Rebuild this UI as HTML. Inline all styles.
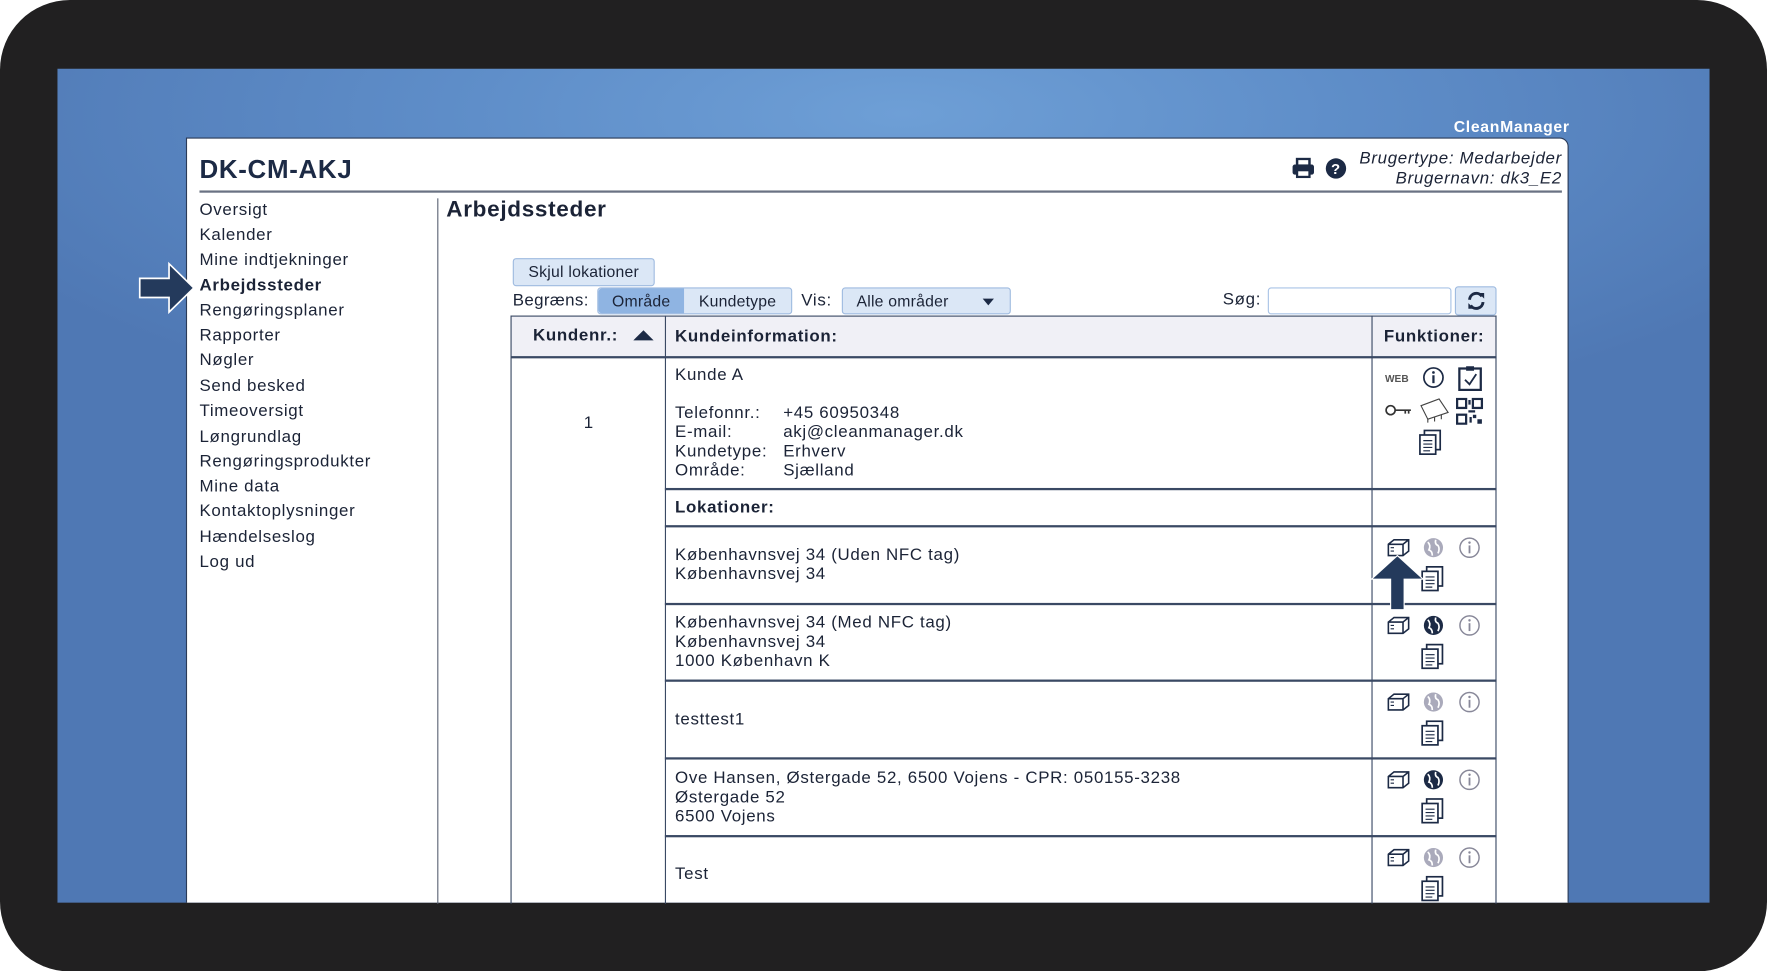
<!DOCTYPE html>
<html><head><meta charset="utf-8">
<style>
html,body{margin:0;padding:0;width:1767px;height:971px;overflow:hidden;background:#fff;}
#s{position:absolute;left:0;top:0;width:1568px;height:862px;transform:scale(1.12692);transform-origin:0 0;font-family:"Liberation Sans",sans-serif;color:#1b2336;letter-spacing:0.6px;}
.a{position:absolute;white-space:nowrap;}
#frame{position:absolute;left:0;top:0;width:1568px;height:862px;background:#212021;border-radius:62px;}
#blue{position:absolute;left:51px;top:61px;width:1466px;height:740px;overflow:hidden;
background:radial-gradient(ellipse 900px 300px at 750px 40px,#6e9fd6 0%,#5e8dc8 45%,#4f78b4 100%);}
#panel{position:absolute;left:114px;top:61px;width:1225px;height:700px;background:#fff;border:1px solid #2b3b58;border-radius:0 8px 0 0;}
.t15{font-size:15px;line-height:17px;}
.nav div{position:absolute;left:177px;font-size:15px;}
.btn{position:absolute;background:#dbe7f6;border:1px solid #9fbbe0;border-radius:3px;font-size:14px;text-align:center;}
.vl{position:absolute;width:1px;background:#3a4964;}
.hl{position:absolute;height:1px;background:#3a4964;}
.b{font-weight:bold;}
</style></head><body><div id="s">
<div id="frame"></div>
<div id="blue">
 <div class="a b" style="left:1239px;top:43px;color:#fff;font-size:14px;">CleanManager</div>
 <div id="panel"></div>
</div>
<!-- header -->
<div class="a b" style="left:177px;top:137px;font-size:23px;color:#1c2a45;">DK-CM-AKJ</div>
<div class="hl" style="left:177px;top:169px;width:1209px;background:#6a7283;height:2px"></div>
<svg class="a" style="left:1146px;top:140px" width="21" height="19" viewBox="0 0 21 19"><rect x="5" y="1" width="11" height="6" fill="none" stroke="#1c2a45" stroke-width="2.2"/><rect x="1" y="6" width="19" height="9" rx="2" fill="#1c2a45"/><rect x="5" y="11" width="11" height="6" fill="#fff" stroke="#1c2a45" stroke-width="2"/></svg>
<svg class="a" style="left:1176px;top:140px" width="19" height="19" viewBox="0 0 20 20"><circle cx="10" cy="10" r="9.5" fill="#1c2a45"/><text x="10" y="15" text-anchor="middle" fill="#fff" font-family="Liberation Sans" font-weight="bold" font-size="14">?</text></svg>
<div class="a" style="right:182px;top:132px;font-size:15px;font-style:italic;text-align:right;line-height:18px;">Brugertype: Medarbejder<br>Brugernavn: dk3_E2</div>
<!-- nav -->
<div class="nav">
<div style="top:178px">Oversigt</div><div style="top:200px">Kalender</div><div style="top:222px">Mine indtjekninger</div>
<div style="top:245px;font-weight:bold">Arbejdssteder</div><div style="top:267px">Rengøringsplaner</div><div style="top:289px">Rapporter</div>
<div style="top:311px">Nøgler</div><div style="top:334px">Send besked</div><div style="top:356px">Timeoversigt</div>
<div style="top:379px">Løngrundlag</div><div style="top:401px">Rengøringsprodukter</div><div style="top:423px">Mine data</div>
<div style="top:445px">Kontaktoplysninger</div><div style="top:468px">Hændelseslog</div><div style="top:490px">Log ud</div>
</div>
<svg class="a" style="left:122px;top:232px" width="52" height="47" viewBox="0 0 52 47"><path d="M2 15 H28 V2 L50 23.5 L28 45 V32 H2 Z" fill="#243a5c" stroke="#fff" stroke-width="1.5"/></svg>
<div class="vl" style="left:388px;top:176px;height:626px;background:#5c6475"></div>
<div class="a b" style="left:396px;top:175px;font-size:20px;">Arbejdssteder</div>
<!-- controls -->
<div class="btn" style="left:455px;top:229px;width:124px;height:23px;line-height:23px;letter-spacing:0.2px">Skjul lokationer</div>
<div class="a t15" style="left:455px;top:258px;letter-spacing:0.3px">Begræns:</div>
<div class="btn" style="left:530px;top:255px;width:171px;height:22px;"></div>
<div class="a" style="left:531px;top:256px;width:76px;height:22px;background:#8fb4e2;border-radius:3px 0 0 3px;font-size:14px;line-height:22px;text-align:center;letter-spacing:0.2px">Område</div>
<div class="a" style="left:608px;top:256px;width:93px;font-size:14px;line-height:22px;text-align:center;letter-spacing:0.2px">Kundetype</div>
<div class="a t15" style="left:711px;top:258px;">Vis:</div>
<div class="btn" style="left:747px;top:255px;width:148px;height:22px;line-height:22px;text-align:left;letter-spacing:0.2px"><span style="margin-left:12px">Alle områder</span><span style="position:absolute;right:14px;top:9px;border-left:5px solid transparent;border-right:5px solid transparent;border-top:6px solid #1c2a45;"></span></div>
<div class="a t15" style="left:1085px;top:257px;">Søg:</div>
<div class="a" style="left:1125px;top:255px;width:161px;height:22px;border:1px solid #a9c3e6;border-radius:3px;background:#fff;"></div>
<div class="btn" style="left:1291px;top:254px;width:35px;height:24px;"><svg style="margin-top:3px" width="18" height="18" viewBox="0 0 18 18"><path d="M3 8 A6 6 0 0 1 14 5" fill="none" stroke="#1c2a45" stroke-width="2.6"/><path d="M11 2 L16 2 L16 7Z" fill="#1c2a45"/><path d="M15 10 A6 6 0 0 1 4 13" fill="none" stroke="#1c2a45" stroke-width="2.6"/><path d="M7 16 L2 16 L2 11Z" fill="#1c2a45"/></svg></div>
<!-- table -->
<div class="a" style="left:453px;top:281px;width:874px;height:35px;background:#f0f0f6;"></div>
<div class="hl" style="left:453px;top:280px;width:875px;"></div>
<div class="hl" style="left:453px;top:316px;width:875px;height:2px"></div>
<div class="vl" style="left:453px;top:280px;height:522px;"></div>
<div class="vl" style="left:590px;top:280px;height:522px;"></div>
<div class="vl" style="left:1217px;top:280px;height:522px;"></div>
<div class="vl" style="left:1327px;top:280px;height:522px;"></div>
<div class="a b t15" style="left:473px;top:289px;">Kundenr.:</div>
<div class="a" style="left:562px;top:293px;border-left:9px solid transparent;border-right:9px solid transparent;border-bottom:9px solid #1c2a45;"></div>
<div class="a b t15" style="left:599px;top:290px;">Kundeinformation:</div>
<div class="a b t15" style="left:1228px;top:290px;">Funktioner:</div>
<div class="a t15" style="left:518px;top:367px;">1</div>
<div class="a t15" style="left:599px;top:324px;">Kunde A</div>
<div class="a t15" style="left:599px;top:358px;">Telefonnr.:<br>E-mail:<br>Kundetype:<br>Område:</div>
<div class="a t15" style="left:695px;top:358px;">+45 60950348<br>akj@cleanmanager.dk<br>Erhverv<br>Sjælland</div>
<div class="a" style="left:1229px;top:331px;font-size:9px;font-weight:bold;color:#555;letter-spacing:0">WEB</div>
<svg class="a" style="left:1262px;top:325px" width="20" height="20"><circle cx="10" cy="10" r="8.5" fill="none" stroke="#1c2a45" stroke-width="1.5"/><rect x="9" y="8" width="2" height="7" fill="#1c2a45"/><circle cx="10" cy="5.5" r="1.2" fill="#1c2a45"/></svg>
<svg class="a" style="left:1293px;top:324px" width="23" height="23"><rect x="2" y="3" width="19" height="19" fill="none" stroke="#1c2a45" stroke-width="2"/><rect x="8" y="1" width="7" height="4" fill="#1c2a45"/><path d="M7 13 L11 17 L17 8" fill="none" stroke="#1c2a45" stroke-width="1.6"/></svg>
<svg class="a" style="left:1229px;top:357px" width="24" height="14"><circle cx="5" cy="7" r="4" fill="none" stroke="#333" stroke-width="1.5"/><path d="M9 7 H23 M18 7 V10 M21 7 V10" stroke="#333" stroke-width="1.5"/></svg>
<svg class="a" style="left:1259px;top:352px" width="28" height="24"><path d="M2 8 L18 2 L26 14 L8 20 Z" fill="none" stroke="#444" stroke-width="1"/><path d="M8 20 V23 M14 18 V22 M20 16 V20" stroke="#444"/></svg>
<svg class="a" style="left:1292px;top:353px" width="25" height="24"><rect x="1" y="1" width="8" height="8" fill="none" stroke="#1c2a45" stroke-width="2"/><rect x="15" y="1" width="8" height="8" fill="none" stroke="#1c2a45" stroke-width="2"/><rect x="1" y="15" width="8" height="8" fill="none" stroke="#1c2a45" stroke-width="2"/><path d="M11 2h2v4h-2zM11 11h6v2h-6zM15 15h3v3h-3zM19 19h4v4h-4zM12 17h2v5h-2z" fill="#1c2a45"/></svg>
<svg class="a" style="left:1258px;top:381px" width="22" height="24"><rect x="6" y="1" width="14" height="17" fill="#fff" stroke="#1c2a45" stroke-width="1.5"/><rect x="2" y="5" width="14" height="17" fill="#fff" stroke="#1c2a45" stroke-width="1.5"/><path d="M5 10h8M5 13h8M5 16h8M5 19h6" stroke="#1c2a45"/></svg>
<div class="hl" style="left:590px;top:433px;width:738px;height:2px"></div>
<div class="a b t15" style="left:599px;top:442px;">Lokationer:</div>
<div class="hl" style="left:590px;top:466px;width:738px;height:2px"></div>
<div class="a t15" style="left:599px;top:484px;">Københavnsvej 34 (Uden NFC tag)<br>Københavnsvej 34</div>
<div class="hl" style="left:590px;top:535px;width:738px;height:2px"></div>
<div class="a t15" style="left:599px;top:544px;">Københavnsvej 34 (Med NFC tag)<br>Københavnsvej 34<br>1000 København K</div>
<div class="hl" style="left:590px;top:603px;width:738px;height:2px"></div>
<div class="a t15" style="left:599px;top:630px;">testtest1</div>
<div class="hl" style="left:590px;top:672px;width:738px;height:2px"></div>
<div class="a t15" style="left:599px;top:682px;">Ove Hansen, Østergade 52, 6500 Vojens - CPR: 050155-3238<br>Østergade 52<br>6500 Vojens</div>
<div class="hl" style="left:590px;top:741px;width:738px;height:2px"></div>
<div class="a t15" style="left:599px;top:767px;">Test</div>
<!-- location icons -->
<div id="li"></div>
<script>
var ys=[477,546,614,683,752],dark=[0,1,0,1,0],h='';
ys.forEach(function(y,i){
h+='<svg class="a" style="left:1230px;top:'+y+'px" width="22" height="18"><path d="M2 6 L7 2 H20 V12 L15 16 H2 Z M2 6 H15 V16 M15 6 L20 2" fill="none" stroke="#1c2a45" stroke-width="1.4"/><path d="M4 9h3M4 12h3" stroke="#1c2a45"/></svg>';
var g=dark[i]?'#1c2a45':'#aab';
h+='<svg class="a" style="left:1262px;top:'+(y-1)+'px" width="20" height="20"><circle cx="10" cy="10" r="8.5" fill="'+g+'"/><path d="M5 5 Q8 8 6 12 Q9 13 9 17 M12 3 Q11 7 14 8 Q16 11 14 15" stroke="#fff" stroke-width="1.5" fill="none"/></svg>';
h+='<svg class="a" style="left:1294px;top:'+(y-1)+'px" width="20" height="20"><circle cx="10" cy="10" r="8.5" fill="none" stroke="#889" stroke-width="1.3"/><rect x="9.2" y="8" width="1.6" height="7" fill="#889"/><circle cx="10" cy="5.5" r="1.1" fill="#889"/></svg>';
h+='<svg class="a" style="left:1260px;top:'+(y+25)+'px" width="22" height="24"><rect x="6" y="1" width="14" height="17" fill="#fff" stroke="#1c2a45" stroke-width="1.5"/><rect x="2" y="5" width="14" height="17" fill="#fff" stroke="#1c2a45" stroke-width="1.5"/><path d="M5 10h8M5 13h8M5 16h8M5 19h6" stroke="#1c2a45"/></svg>';
});
document.getElementById('li').innerHTML=h;
</script>
<svg class="a" style="left:1216px;top:492px" width="48" height="50" viewBox="0 0 48 50"><path d="M1 22 L24 1 L47 22 H30 V49 H18 V22 Z" fill="#243a5c" stroke="#fff" stroke-width="1"/></svg>
</div></body></html>
